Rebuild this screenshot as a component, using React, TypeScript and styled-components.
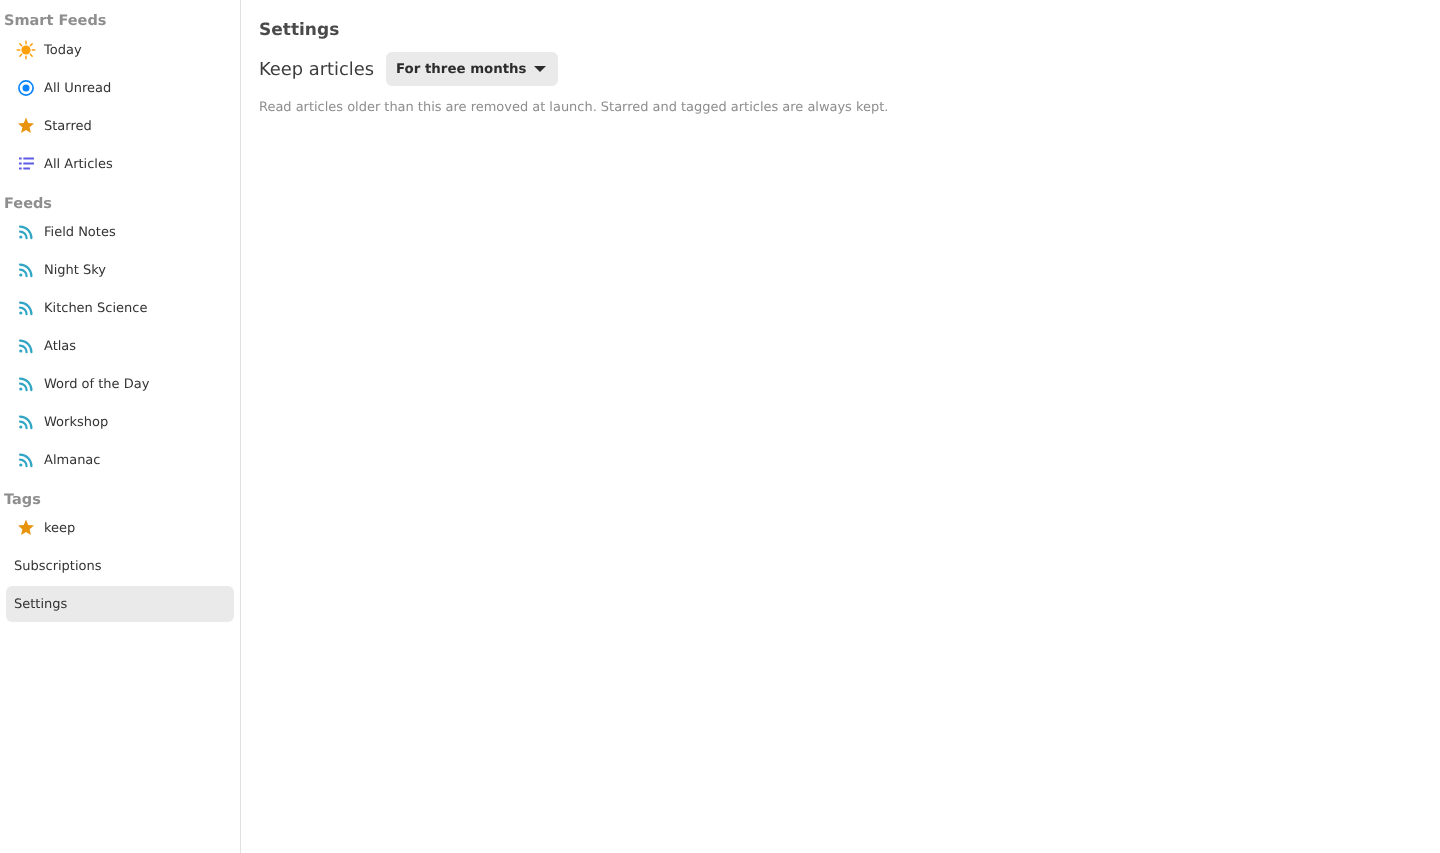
import {FC, ReactNode} from 'react'
import styled, {createGlobalStyle} from 'styled-components'

const GlobalStyle = createGlobalStyle`
  html, body {
    margin: 0;
    padding: 0;
    height: 100%;
    background: #fff;
  }

  body {
    font-family: "DejaVu Sans", sans-serif;
    text-rendering: geometricPrecision;
  }
`

const SunIcon: FC = () => (
  <svg width="20" height="20" viewBox="0 0 20 20" fill="none">
    <circle cx="10" cy="10" r="4.6" fill="#ff9f0a" />
    <g stroke="#ff9f0a" strokeWidth="1.5" strokeLinecap="round">
      <path d="M10 1.2v2.6M10 16.2v2.6M1.2 10h2.6M16.2 10h2.6M3.8 3.8l1.8 1.8M14.4 14.4l1.8 1.8M3.8 16.2l1.8-1.8M14.4 5.6l1.8-1.8" />
    </g>
  </svg>
)

const UnreadIcon: FC = () => (
  <svg width="20" height="20" viewBox="0 0 20 20" fill="none">
    <circle cx="10" cy="10" r="7.1" stroke="#0a84ff" strokeWidth="1.7" />
    <circle cx="10" cy="10" r="3.5" fill="#0a84ff" />
  </svg>
)

const StarIcon: FC = () => (
  <svg width="20" height="20" viewBox="0 0 20 20">
    <path
      d="M10 1.6L12.2 6.9 18 7.4 13.6 11.2 14.9 16.9 10 13.9 5.1 16.9 6.4 11.2 2 7.4 7.8 6.9Z"
      fill="#e8930c"
    />
  </svg>
)

const ListIcon: FC = () => (
  <svg width="20" height="20" viewBox="0 0 20 20" fill="none">
    <g stroke="#5e5ce6" strokeWidth="1.8">
      <path d="M7.3 4.5H18M7.3 9.5H18M7.3 14.5H14" />
      <path d="M3 4.5h2.7M3 9.5h2.7M3 14.5h2.7" />
    </g>
  </svg>
)

const FeedIcon: FC = () => (
  <svg width="20" height="20" viewBox="0 0 20 20" fill="none">
    <circle cx="4.8" cy="15" r="1.6" fill="#30a5c4" />
    <path
      d="M4 9.6c3.6 0 6.6 3 6.6 6.6M4 4.6c6.4 0 11.4 5.2 11.4 11.6"
      stroke="#30a5c4"
      strokeWidth="2.2"
      strokeLinecap="round"
    />
  </svg>
)

const feeds = [
  'Field Notes',
  'Night Sky',
  'Kitchen Science',
  'Atlas',
  'Word of the Day',
  'Workshop',
  'Almanac'
]

interface INavItemProps {
  icon?: ReactNode
  label: string
  selected?: boolean
}

const NavItem: FC<INavItemProps> = ({icon, label, selected}) => (
  <Row $selected={selected}>
    {icon && <IconSlot>{icon}</IconSlot>}
    <RowLabel>{label}</RowLabel>
  </Row>
)

const App: FC = () => {
  return (
    <Page>
      <GlobalStyle />
      <Sidebar>
        <SectionTitle>Smart Feeds</SectionTitle>
        <NavItem icon={<SunIcon />} label="Today" />
        <NavItem icon={<UnreadIcon />} label="All Unread" />
        <NavItem icon={<StarIcon />} label="Starred" />
        <NavItem icon={<ListIcon />} label="All Articles" />
        <SectionTitle>Feeds</SectionTitle>
        {feeds.map(feed => (
          <NavItem key={feed} icon={<FeedIcon />} label={feed} />
        ))}
        <SectionTitle>Tags</SectionTitle>
        <NavItem icon={<StarIcon />} label="keep" />
        <NavItem label="Subscriptions" />
        <NavItem label="Settings" selected />
      </Sidebar>
      <Content>
        <Title>Settings</Title>
        <SettingRow>
          <SettingLabel>Keep articles</SettingLabel>
          <SelectButton>
            For three months
            <Caret />
          </SelectButton>
        </SettingRow>
        <Note>
          Read articles older than this are removed at launch. Starred and tagged articles are
          always kept.
        </Note>
      </Content>
    </Page>
  )
}

const Page = styled.div`
  display: flex;
  height: 853px;
  overflow: hidden;
  will-change: transform;
`

const Sidebar = styled.nav`
  width: 240px;
  flex-shrink: 0;
  box-sizing: content-box;
  border-right: 1px solid #e0e0e0;
  padding-top: 12px;
`

const SectionTitle = styled.h2`
  margin: 0;
  padding: 0 4px;
  height: 18px;
  line-height: 18px;
  font-size: 14.5px;
  font-weight: 700;
  color: #8e8e8e;

  &:not(:first-child) {
    margin-top: 13px;
    margin-bottom: 1px;
  }

  &:first-child {
    margin-bottom: 2px;
  }
`

const Row = styled.div<{$selected?: boolean}>`
  display: flex;
  align-items: center;
  height: 36px;
  margin: 0 6px 2px;
  padding: 0 8px;
  border-radius: 6px;
  background: ${({$selected}) => ($selected ? '#eaeaea' : 'transparent')};
`

const IconSlot = styled.span`
  display: flex;
  width: 20px;
  height: 20px;
  margin: 0 8px 0 2px;
`

const RowLabel = styled.span`
  font-size: 13px;
  color: #333;
`

const Content = styled.main`
  flex: 1;
  padding: 19px 18px 0;
`

const Title = styled.h1`
  margin: 0 0 11px;
  height: 22px;
  line-height: 22px;
  font-size: 17px;
  font-weight: 700;
  color: #4a4a4a;
`

const SettingRow = styled.div`
  display: flex;
  align-items: center;
  gap: 12px;
`

const SettingLabel = styled.span`
  font-size: 17.85px;
  color: #3c3c3c;
`

const SelectButton = styled.div`
  display: flex;
  align-items: center;
  justify-content: space-between;
  box-sizing: border-box;
  width: 172px;
  height: 34px;
  padding: 0 12px 0 10px;
  border-radius: 6px;
  background: #eaeaea;
  font-size: 13.33px;
  font-weight: 700;
  color: #2c2c2c;
`

const Caret = styled.span`
  width: 0;
  height: 0;
  border-left: 6px solid transparent;
  border-right: 6px solid transparent;
  border-top: 6px solid #2c2c2c;
`

const Note = styled.p`
  margin: 14px 0 0;
  font-size: 12.96px;
  line-height: 16px;
  color: #8e8e8e;
`

export default App
